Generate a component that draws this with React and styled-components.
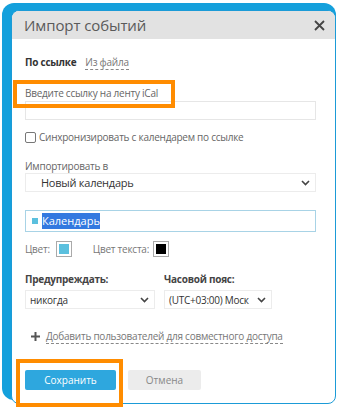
import React from 'react';
import styled, { createGlobalStyle } from 'styled-components';

const GlobalStyle = createGlobalStyle`
  body {
    margin: 0;
    background: #ffffff;
    font-family: "Open Sans", "Liberation Sans", sans-serif;
  }
`;

const Page = styled.div`
  position: relative;
  width: 357px;
  height: 411px;
  padding: 3px 0 0 2px;
  box-sizing: border-box;
`;

const Frame = styled.div`
  width: 334px;
  height: 397px;
  box-sizing: border-box;
  padding: 7px 0 0 9px;
  background: #14a0dc;
  border-radius: 12px;
`;

const Dialog = styled.div`
  height: 394px;
  box-sizing: border-box;
  background: #ffffff;
  border: 1px solid #1b9bd7;
  border-radius: 8px;
  overflow: hidden;
`;

const Header = styled.div`
  height: 28px;
  background: #e2e2e2;
  display: flex;
  align-items: center;
  justify-content: space-between;
  padding: 0 10px 0 12px;
`;

const Title = styled.div`
  font-size: 15px;
  letter-spacing: -0.1px;
  color: #5a5a5a;
`;

const Close = styled.svg`
  width: 11px;
  height: 11px;
`;

const Body = styled.div`
  padding: 16px 19px 0 13px;
  display: flex;
  flex-direction: column;
  font-size: 10px;
  letter-spacing: -0.25px;
`;

const Tabs = styled.div`
  display: flex;
  gap: 9px;
  line-height: 14px;
`;

const Tab = styled.span`
  color: ${p => (p.active ? '#333' : '#777')};
  font-weight: ${p => (p.active ? 700 : 400)};
  border-bottom: ${p => (p.active ? 'none' : '1px dashed #888')};
`;

const Label = styled.div`
  line-height: 14px;
  color: ${p => (p.bold ? '#444' : '#666')};
  font-weight: ${p => (p.bold ? 700 : 400)};
  margin-top: ${p => p.mt || 0}px;
`;

const TextInput = styled.div`
  height: 19px;
  box-sizing: border-box;
  border: 1px solid #e6e6e6;
  margin-top: 1px;
`;

const CheckRow = styled.label`
  display: flex;
  align-items: center;
  gap: 3px;
  margin-top: 10px;
  line-height: 14px;
  color: #666;
`;

const Box = styled.span`
  width: 9px;
  height: 9px;
  border: 1px solid #777;
  border-radius: 2px;
`;

const Select = styled.div`
  height: 19px;
  box-sizing: border-box;
  border: 1px solid #ececec;
  display: flex;
  align-items: center;
  justify-content: space-between;
  padding: 0 5px 0 ${p => p.pl || 4}px;
  font-size: ${p => p.fs || 10}px;
  color: #333;
  width: ${p => (p.w ? p.w + 'px' : 'auto')};
  white-space: nowrap;
  overflow: hidden;
`;

const Chevron = () => (
  <svg width="9" height="6" viewBox="0 0 9 6">
    <path d="M1 1l3.5 3.5L8 1" fill="none" stroke="#444" strokeWidth="1.6" />
  </svg>
);

const CalInput = styled.div`
  height: 22px;
  margin-top: 18px;
  box-sizing: border-box;
  border: 1px solid #a8d3e6;
  display: flex;
  align-items: center;
  padding-left: 6px;
  gap: 4px;
`;

const Dot = styled.span`
  width: 6px;
  height: 6px;
  background: #5bc0de;
`;

const Selected = styled.span`
  background: #3379e0;
  color: #fff;
  font-size: 11px;
  line-height: 16px;
  letter-spacing: 0;
`;

const ColorRow = styled.div`
  display: flex;
  align-items: center;
  margin-top: 10px;
  color: #777;
`;

const Swatch = styled.span`
  width: 10px;
  height: 10px;
  border: 2px solid #fff;
  outline: 1px solid #aaa;
  background: ${p => p.color};
  margin: 0 ${p => p.mr || 0}px 0 ${p => p.ml || 0}px;
`;

const TwoCols = styled.div`
  display: grid;
  grid-template-columns: 139px 108px;
  margin-top: 16px;
`;

const Col = styled.div`
  display: flex;
  flex-direction: column;
  gap: 4px;
`;

const AddLink = styled.div`
  display: flex;
  align-items: center;
  gap: 6px;
  margin: 20px 0 0 6px;
  line-height: 14px;
  color: #777;
  white-space: nowrap;
  span {
    border-bottom: 1px dashed #888;
  }
`;

const Buttons = styled.div`
  display: flex;
  gap: 12px;
  margin-top: 26px;
`;

const Button = styled.button`
  height: 20px;
  width: ${p => p.w}px;
  border: none;
  border-radius: 2px;
  font-family: inherit;
  font-size: 10px;
  padding: 0;
  background: ${p => (p.primary ? '#2ea7de' : '#ececec')};
  color: ${p => (p.primary ? '#fff' : '#888')};
`;

const Marker = styled.div`
  position: absolute;
  box-sizing: border-box;
  border: 4px solid #ff8c00;
  left: ${p => p.x}px;
  top: ${p => p.y}px;
  width: ${p => p.w}px;
  height: ${p => p.h}px;
`;

export default function App() {
  return (
    <>
      <GlobalStyle />
      <Page>
        <Frame>
          <Dialog>
            <Header>
              <Title>Импорт событий</Title>
              <Close viewBox="0 0 11 11">
                <path d="M1 1l9 9M10 1l-9 9" stroke="#444" strokeWidth="1.8" />
              </Close>
            </Header>
            <Body>
              <Tabs>
                <Tab active>По ссылке</Tab>
                <Tab>Из файла</Tab>
              </Tabs>
              <Label mt={16}>Введите ссылку на ленту iCal</Label>
              <TextInput />
              <CheckRow>
                <Box />
                Синхронизировать с календарем по ссылке
              </CheckRow>
              <Label mt={15}>Импортировать в</Label>
              <Select pl={15} fs={11}>
                Новый календарь
                <Chevron />
              </Select>
              <CalInput>
                <Dot />
                <Selected>Календарь</Selected>
              </CalInput>
              <ColorRow>
                Цвет:
                <Swatch color="#5bc0de" ml={7} mr={22} />
                Цвет текста:
                <Swatch color="#000" ml={5} />
              </ColorRow>
              <TwoCols>
                <Col>
                  <Label bold>Предупреждать:</Label>
                  <Select w={130}>
                    никогда
                    <Chevron />
                  </Select>
                </Col>
                <Col>
                  <Label bold>Часовой пояс:</Label>
                  <Select w={108}>
                    (UTC+03:00) Моск
                    <Chevron />
                  </Select>
                </Col>
              </TwoCols>
              <AddLink>
                <svg width="9" height="9" viewBox="0 0 9 9">
                  <path d="M4.5 0v9M0 4.5h9" stroke="#555" strokeWidth="2" />
                </svg>
                <span>Добавить пользователей для совместного доступа</span>
              </AddLink>
              <Buttons>
                <Button primary w={91}>Сохранить</Button>
                <Button w={73}>Отмена</Button>
              </Buttons>
            </Body>
          </Dialog>
        </Frame>
        <Marker x={13} y={80} w={162} h={28} />
        <Marker x={16} y={359} w={107} h={48} />
      </Page>
    </>
  );
}
